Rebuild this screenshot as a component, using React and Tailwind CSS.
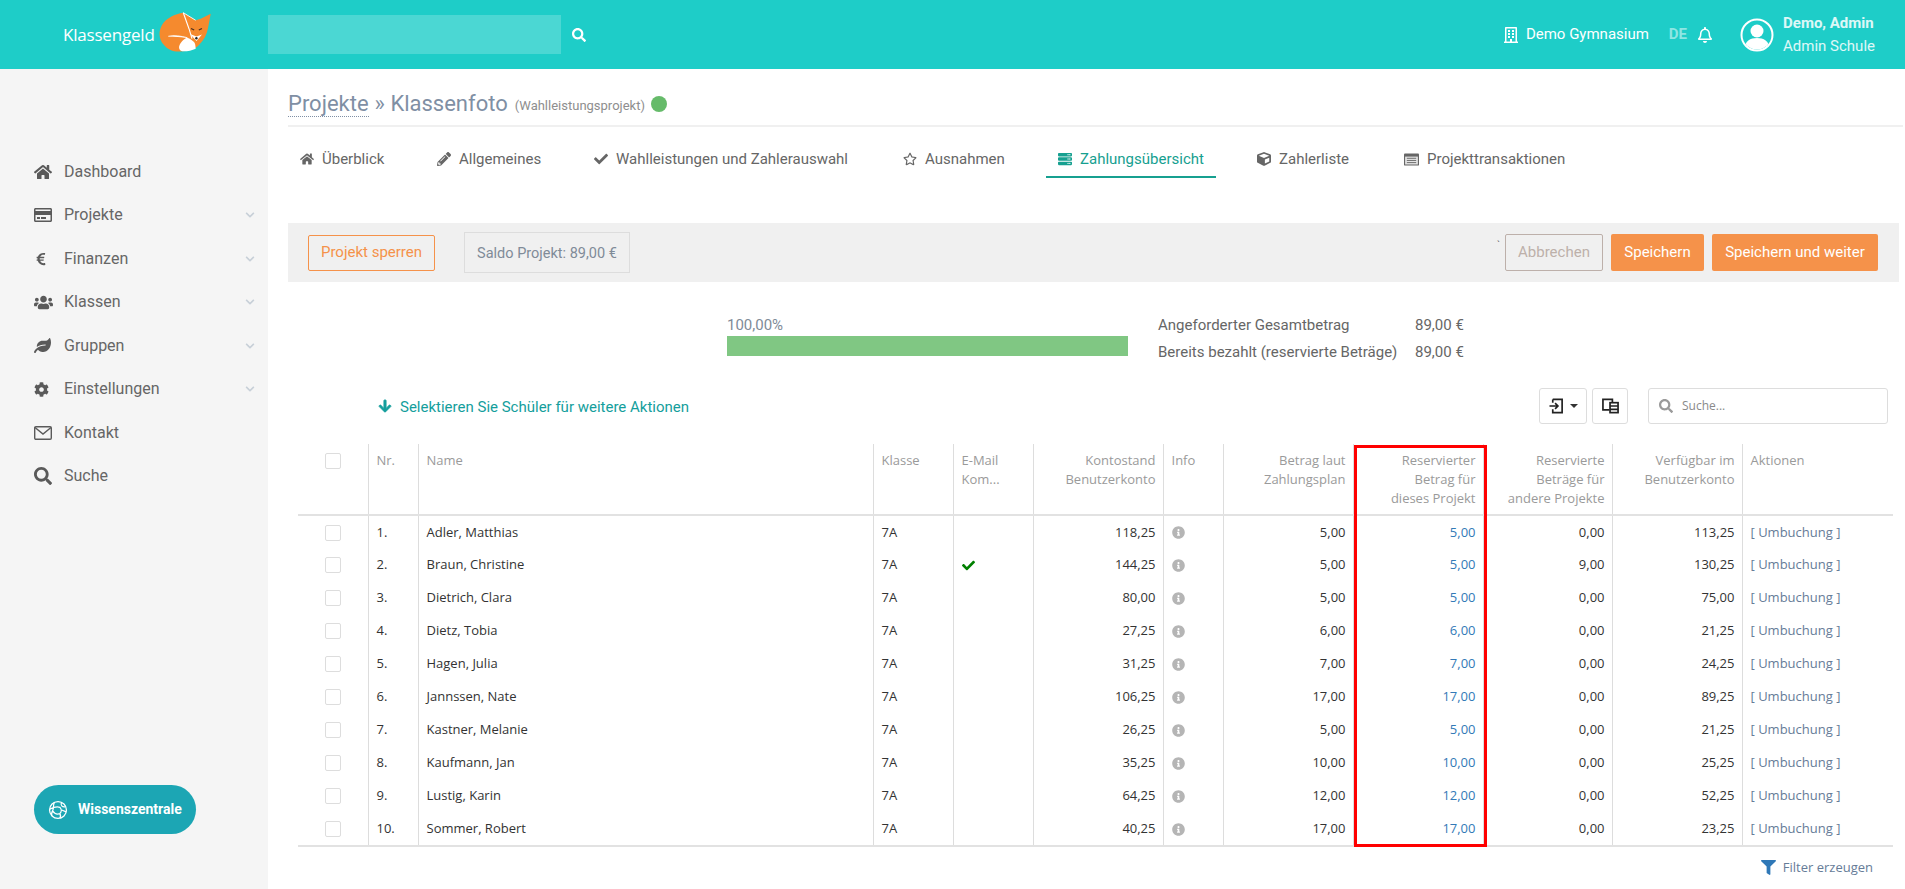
import React from "react";
import {
  FaHome, FaRegCreditCard, FaEuroSign, FaUsers, FaLeaf, FaCog, FaSearch, FaChevronDown,
  FaPencilAlt, FaCheck, FaRegStar, FaServer, FaCube, FaArrowDown, FaInfoCircle, FaFilter, FaRegBell, FaRegBuilding,
} from "react-icons/fa";

function Envelope({ className }) {
  return (
    <svg viewBox="0 0 18 14" className={"w-[18px] h-[14px] " + (className || "")} fill="none" stroke="#5a5a5a" strokeWidth="1.4">
      <rect x="0.7" y="0.7" width="16.6" height="12.6" rx="1.2" />
      <path d="M1 1.5 L9 8 L17 1.5" />
    </svg>
  );
}

function ListBox() {
  return (
    <svg viewBox="0 0 16 13" className="w-[15px] h-[13px]">
      <rect x="0" y="0" width="16" height="13" rx="1" fill="#666666" />
      <rect x="1.2" y="3.4" width="13.6" height="8.4" fill="#e4e4e4" />
      <path d="M3 5.2 H13 M3 7.5 H13 M3 9.8 H13" stroke="#666666" strokeWidth="1" />
    </svg>
  );
}

const side = [
  [FaHome, "Dashboard", false, "text-[18px]"],
  [FaRegCreditCard, "Projekte", true, "text-[18px]"],
  [FaEuroSign, "Finanzen", true, "text-[14px]"],
  [FaUsers, "Klassen", true, "text-[19px]"],
  [FaLeaf, "Gruppen", true, "text-[17px]"],
  [FaCog, "Einstellungen", true, "text-[15px]"],
  [Envelope, "Kontakt", false, ""],
  [FaSearch, "Suche", false, "text-[18px]"],
];

const tabs = [
  [FaHome, "Überblick", "w-[137px]"],
  [FaPencilAlt, "Allgemeines", "w-[157px]"],
  [FaCheck, "Wahlleistungen und Zahlerauswahl", "w-[309px]"],
  [FaRegStar, "Ausnahmen", "w-[155px]"],
  [FaServer, "Zahlungsübersicht", "w-[199px]"],
  [FaCube, "Zahlerliste", "w-[147px]"],
  [ListBox, "Projekttransaktionen", "w-[180px]"],
];

const rows = [
  ["1.", "Adler, Matthias", false, "118,25", "5,00", "5,00", "0,00", "113,25"],
  ["2.", "Braun, Christine", true, "144,25", "5,00", "5,00", "9,00", "130,25"],
  ["3.", "Dietrich, Clara", false, "80,00", "5,00", "5,00", "0,00", "75,00"],
  ["4.", "Dietz, Tobia", false, "27,25", "6,00", "6,00", "0,00", "21,25"],
  ["5.", "Hagen, Julia", false, "31,25", "7,00", "7,00", "0,00", "24,25"],
  ["6.", "Jannssen, Nate", false, "106,25", "17,00", "17,00", "0,00", "89,25"],
  ["7.", "Kastner, Melanie", false, "26,25", "5,00", "5,00", "0,00", "21,25"],
  ["8.", "Kaufmann, Jan", false, "35,25", "10,00", "10,00", "0,00", "25,25"],
  ["9.", "Lustig, Karin", false, "64,25", "12,00", "12,00", "0,00", "52,25"],
  ["10.", "Sommer, Robert", false, "40,25", "17,00", "17,00", "0,00", "23,25"],
];

const sep = "border-l border-[#dddddd]";
const th = "align-top font-normal text-[13px] leading-[19px] text-[#9a9a9a] pt-[7px] pl-[8px] pr-[7px] " + sep;
const td = "h-[33px] pt-[1px] pb-0 pl-[8px] pr-[7px] text-[13px] align-middle " + sep;

function Box() {
  return <span className="block w-[16px] h-[16px] border border-[#dddddd] rounded-[2px] bg-white mx-auto" />;
}

function Fox() {
  return (
    <svg viewBox="0 0 52 42" className="w-[52px] h-[42px]">
      <path d="M24.3 0.7 C16 2 7 6 3 13 C-1 20 0 28 5 33 C9 38 15 40 21 39.5 C29 39 35 38 40 33 C45 28 48 22 49 16 C50 11 51 6 51.7 1.7 L41.7 6.7 L36.7 8.3 Z" fill="#f58a2e" />
      <path d="M9.3 24.3 C15 23 22 24 28.3 25.7 C24 27 21 31 20 35 C20 37 21 39 23.3 39.3 C28 39.5 33 38.5 36.7 36.7 C36.5 33 36 31 35 30 C33 28 31 26.5 28.3 25.7" fill="#ffffff" />
      <path d="M9.3 24.3 C15 23 22 24 28.3 25.7" stroke="#ffffff" strokeWidth="0.9" fill="none" />
      <path d="M24.3 0.7 L30 16.7 L33 26.7" stroke="#ffffff" strokeWidth="1.1" fill="none" />
      <path d="M24.3 0.7 L36.7 8.3" stroke="#ffffff" strokeWidth="0.9" fill="none" />
      <path d="M31 22 L37.5 29 L43 22.5 L37.5 24.5 Z" fill="#ffffff" />
      <circle cx="37.4" cy="26.2" r="1.2" fill="#222222" />
      <path d="M32 16.5 L35.2 18 M43 16.5 L39.8 18" stroke="#4a3020" strokeWidth="1.3" />
    </svg>
  );
}

function Avatar() {
  return (
    <svg viewBox="0 0 34 34" className="w-[34px] h-[34px]">
      <defs>
        <clipPath id="av"><circle cx="17" cy="17" r="14.5" /></clipPath>
      </defs>
      <circle cx="17" cy="17" r="15.5" fill="none" stroke="#ffffff" strokeWidth="2" />
      <g clipPath="url(#av)" fill="#ffffff">
        <circle cx="17" cy="13" r="6.5" />
        <path d="M4 34 C4 23 10 20 17 20 C24 20 30 23 30 34 Z" />
      </g>
    </svg>
  );
}

function Globe() {
  return (
    <svg viewBox="0 0 22 22" className="w-[20px] h-[20px]" fill="none" stroke="#ffffff" strokeWidth="1.4">
      <circle cx="11" cy="11" r="9.3" />
      <path d="M7 2.5 C5 7 7 9 5 12 C4 14 3.5 16 4.5 17.5 M15 2.5 C13 6 16 8 19 7.5 M2 10 C6 8 9 7 13 8 C15 10 15 13 13 15 C10 16 7 15 5 12 M13 15 C14 17 14 19 13 20 M15 11 L20 13" />
    </svg>
  );
}

function ImportIcon() {
  return (
    <svg viewBox="0 0 16 16" className="w-[15px] h-[16px]" fill="none" stroke="#222222" strokeWidth="1.8">
      <path d="M4 1 H14 V15 H4 V11.5" />
      <path d="M4 1 V4.5" />
      <path d="M0.5 8 H9.5 M6.5 5 L9.5 8 L6.5 11" />
    </svg>
  );
}

function ColumnsIcon() {
  return (
    <svg viewBox="0 0 18 16" className="w-[17px] h-[16px]" fill="none" stroke="#222222" strokeWidth="1.8">
      <path d="M8 12 H1 V1 H11 V4" />
      <rect x="8.5" y="4.5" width="8.5" height="10.5" fill="#ffffff" />
      <path d="M8.5 8 H17 M8.5 11.5 H17" />
    </svg>
  );
}

export default function App() {
  return (
    <div className="h-screen overflow-hidden flex flex-col bg-white font-['Roboto',sans-serif]">
      <header className="h-[69px] shrink-0 bg-[#1ecdc8] flex items-center text-white">
        <div className="w-[268px] shrink-0 flex items-center pl-[63px]">
          <span className="text-[17px] font-['Open_Sans',sans-serif] tracking-[-0.2px]">Klassengeld</span>
          <span className="ml-[4px] -mt-[3px]"><Fox /></span>
        </div>
        <div className="w-[293px] h-[39px] bg-white/20" />
        <FaSearch className="ml-[11px] text-[14px]" />
        <div className="flex-1" />
        <FaRegBuilding className="text-[16px]" />
        <span className="ml-[7px] text-[15px]">Demo Gymnasium</span>
        <span className="ml-[20px] text-[15px] font-bold text-white/50">DE</span>
        <FaRegBell className="ml-[10px] text-[16px]" />
        <span className="ml-[27px]"><Avatar /></span>
        <div className="ml-[9px] mr-[30px] leading-[23px]">
          <div className="text-[15px] font-bold text-white/85">Demo, Admin</div>
          <div className="text-[15px] text-white/85">Admin Schule</div>
        </div>
      </header>
      <div className="flex-1 flex min-h-0">
        <aside className="w-[268px] shrink-0 bg-[#f5f5f5] flex flex-col pl-[34px] pt-[81px] pr-[13px]">
          {side.map(([I, t, c, s]) => (
            <div key={t} className="h-[43.5px] flex items-center text-[#666666] text-[16px]">
              <span className="w-[30px] shrink-0"><I className={s + " text-[#5a5a5a]"} /></span>
              <span className="flex-1">{t}</span>
              {c && <FaChevronDown className="text-[10px] text-[#c8d0d8]" />}
            </div>
          ))}
          <div className="flex-1" />
          <div className="w-[162px] h-[49px] rounded-full bg-[#1ca6b4] flex items-center pl-[14px] gap-[10px] text-white text-[14px] font-bold mb-[55px]">
            <Globe />
            <span>Wissenszentrale</span>
          </div>
        </aside>
        <main className="flex-1 min-w-0 pl-[20px]">
          <div className="h-[58px] border-b-2 border-[#f0f0f0] flex items-center text-[#7f8fa4] pt-[13px] mr-[2px]">
            <span className="text-[22px] border-b border-dotted border-[#7f8fa4] leading-[25px]">Projekte</span>
            <span className="text-[22px] ml-[6px]">» Klassenfoto</span>
            <span className="text-[13px] ml-[7px] mt-[4px] text-[#8e8e8e]">(Wahlleistungsprojekt)</span>
            <span className="ml-[6px] w-[16px] h-[16px] rounded-full bg-[#66bb6a]" />
          </div>
          <nav className="flex pl-[12px] h-[51px] text-[15px] text-[#666666]">
            {tabs.map(([I, t, w]) => {
              const a = t === "Zahlungsübersicht";
              return (
                <div key={t} className={w + " h-full"}>
                  <div className={"inline-flex items-center h-full gap-[8px] pt-[15px] border-b-2 " + (a ? "text-[#16a090] border-[#16a090] -ml-[12px] px-[12px]" : "border-transparent")}>
                    <I className="text-[14px]" />
                    <span>{t}</span>
                  </div>
                </div>
              );
            })}
          </nav>
          <div className="mt-[45px] h-[59px] w-[1611px] bg-[#f0f0f0] flex items-center pl-[20px] pr-[21px] text-[15px]">
            <button className="w-[127px] h-[36px] border border-[#f5924a] rounded-[2px] text-[#f5924a]">Projekt sperren</button>
            <div className="ml-[29px] w-[166px] h-[41px] border border-[#dddddd] flex items-center justify-center text-[14.5px] text-[#808b98] pt-[2px]">Saldo Projekt: 89,00 €</div>
            <div className="flex-1" />
            <span className="text-[#666666] text-[10px] -mt-[14px] mr-[5px]">`</span>
            <button className="w-[98px] h-[37px] border border-[#bdb0aa] rounded-[2px] text-[#bdb0aa]">Abbrechen</button>
            <button className="ml-[8px] w-[93px] h-[37px] bg-[#f5924a] rounded-[2px] text-white">Speichern</button>
            <button className="ml-[8px] w-[166px] h-[37px] bg-[#f5924a] rounded-[2px] text-white">Speichern und weiter</button>
          </div>
          <div className="flex pl-[439px] mt-[34px] text-[15px] h-[40px]">
            <div className="w-[401px]">
              <div className="h-[19px] leading-[19px] text-[#808b98]">100,00%</div>
              <div className="mt-[1px] h-[20px] bg-[#80c783]" />
            </div>
            <div className="ml-[30px] -mt-[4px] text-[#666666] leading-[27px]">
              <div className="flex"><span className="w-[257px]">Angeforderter Gesamtbetrag</span><span>89,00 €</span></div>
              <div className="flex"><span className="w-[257px]">Bereits bezahlt (reservierte Beträge)</span><span>89,00 €</span></div>
            </div>
          </div>
          <div className="flex items-center h-[36px] mt-[32px] mr-[17px]">
            <FaArrowDown className="ml-[90px] text-[#149e9c] text-[14px]" strokeWidth={30} />
            <span className="ml-[8px] mt-[2px] text-[15px] text-[#149e9c]">Selektieren Sie Schüler für weitere Aktionen</span>
            <div className="flex-1" />
            <button className="w-[48px] h-[36px] border border-[#dddddd] rounded-[3px] flex items-center justify-center gap-[6px]">
              <ImportIcon />
              <span className="w-0 h-0 border-x-[4px] border-x-transparent border-t-[4px] border-t-[#333333]" />
            </button>
            <button className="ml-[5px] w-[36px] h-[36px] border border-[#dddddd] rounded-[3px] flex items-center justify-center"><ColumnsIcon /></button>
            <div className="ml-[20px] w-[240px] h-[36px] border border-[#dddddd] rounded-[3px] flex items-center pl-[10px] gap-[9px] text-[12px] text-[#8a8a8a] font-['Open_Sans',sans-serif]">
              <FaSearch className="text-[14px] text-[#9a9a9a]" />
              <span>Suche...</span>
            </div>
          </div>
          <div className="relative mt-[20px] ml-[10px] w-[1595px] font-['Open_Sans',sans-serif]">
            <table className="table-fixed border-collapse w-[1595px]">
              <colgroup>
                <col className="w-[70px]" /><col className="w-[50px]" /><col className="w-[455px]" /><col className="w-[80px]" /><col className="w-[80px]" />
                <col className="w-[130px]" /><col className="w-[60px]" /><col className="w-[130px]" /><col className="w-[130px]" /><col className="w-[129px]" /><col className="w-[130px]" /><col className="w-[151px]" />
              </colgroup>
              <thead>
                <tr className="h-[71px] border-b-2 border-[#e2e2e2]">
                  <th className="align-top pt-[9px]"><Box /></th>
                  <th className={th + " text-left"}>Nr.</th>
                  <th className={th + " text-left"}>Name</th>
                  <th className={th + " text-left"}>Klasse</th>
                  <th className={th + " text-left"}>E-Mail<br />Kom...</th>
                  <th className={th + " text-right"}>Kontostand<br />Benutzerkonto</th>
                  <th className={th + " text-left"}>Info</th>
                  <th className={th + " text-right"}>Betrag laut<br />Zahlungsplan</th>
                  <th className={th + " text-right"}>Reservierter<br />Betrag für<br />dieses Projekt</th>
                  <th className={th + " text-right"}>Reservierte<br />Beträge für<br />andere Projekte</th>
                  <th className={th + " text-right"}>Verfügbar im<br />Benutzerkonto</th>
                  <th className={th + " text-left"}>Aktionen</th>
                </tr>
              </thead>
              <tbody>
                {rows.map((r) => (
                  <tr key={r[0]} className="text-[#333333]">
                    <td className="h-[33px] p-0 pt-[1px]"><Box /></td>
                    <td className={td}>{r[0]}</td>
                    <td className={td}>{r[1]}</td>
                    <td className={td}>7A</td>
                    <td className={td}>{r[2] && <FaCheck className="text-[13px] text-[#008000]" />}</td>
                    <td className={td + " text-right"}>{r[3]}</td>
                    <td className={td}><FaInfoCircle className="text-[13px] text-[#b5b5b5]" /></td>
                    <td className={td + " text-right"}>{r[4]}</td>
                    <td className={td + " text-right text-[#337ab7]"}>{r[5]}</td>
                    <td className={td + " text-right"}>{r[6]}</td>
                    <td className={td + " text-right"}>{r[7]}</td>
                    <td className={td + " text-[#667c98]"}>[ Umbuchung ]</td>
                  </tr>
                ))}
              </tbody>
            </table>
            <div className="h-[2px] bg-[#e2e2e2]" />
            <div className="absolute left-[1056px] top-[1px] w-[133px] h-[402px] border-[3px] border-[#ff0000] pointer-events-none" />
            <div className="flex justify-end items-center gap-[7px] mt-[11px] mr-[20px] text-[13px] text-[#667c98]">
              <FaFilter className="text-[15px] text-[#2f78b7]" />
              <span>Filter erzeugen</span>
            </div>
          </div>
        </main>
      </div>
    </div>
  );
}
